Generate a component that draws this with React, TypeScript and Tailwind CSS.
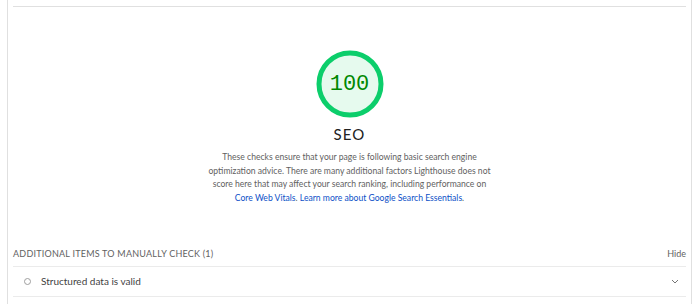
import React from 'react';

const Gauge = ({ score }: { score: number }) => (
    <div className="relative h-[68px] w-[68px]">
        <svg viewBox="0 0 68 68" className="absolute inset-0 h-full w-full">
            <circle cx="34" cy="34" r="31" fill="#e6faee" stroke="#0cce6b" strokeWidth="5" />
        </svg>
        <div className="absolute inset-0 flex items-center justify-center font-['Liberation_Mono',monospace] text-[22px] text-[#008800]">
            {score}
        </div>
    </div>
);

export default function App() {
    return (
        <div className="h-[304px] w-[700px] overflow-hidden bg-white pl-[7px] font-['Lato',sans-serif]">
            <div className="h-full w-[685px] border-x border-[#e0e0e0] px-[5px] pt-[6px]">
                <div className="border-t border-[#e0e0e0]" />
                <div className="flex flex-col items-center pt-[43px]">
                    <Gauge score={100} />
                    <h2 className="mt-[6px] text-[15px] leading-[20px] tracking-[0.08em] text-[#212121]">SEO</h2>
                    <p className="mt-[7px] w-[292px] text-center text-[8.6px] leading-[13.7px] text-[#616161]">
                        These checks ensure that your page is following basic search engine optimization advice. There are many additional factors Lighthouse does not score here that may affect your search ranking, including performance on{' '}
                        <a className="text-[#0c50c7]">Core Web Vitals</a>.{' '}
                        <a className="text-[#0c50c7]">Learn more about Google Search Essentials</a>.
                    </p>
                </div>
                <div className="mt-[41px] flex items-center justify-between pb-[5px] text-[9px] leading-[14px] text-[#616161]">
                    <span className="tracking-[0.025em]">ADDITIONAL ITEMS TO MANUALLY CHECK (1)</span>
                    <span>Hide</span>
                </div>
                <div className="flex h-[31px] items-center justify-between border-y border-[#ebebeb] pl-[11px] pr-[7px]">
                    <div className="flex items-center gap-[10px]">
                        <span className="h-[7px] w-[7px] rounded-full border border-[#9e9e9e]" />
                        <span className="text-[10px] text-[#424242]">Structured data is valid</span>
                    </div>
                    <svg width="8" height="5" viewBox="0 0 8 5" className="text-[#757575]">
                        <path d="M1 1l3 3 3-3" fill="none" stroke="currentColor" strokeWidth="1" />
                    </svg>
                </div>
            </div>
        </div>
    );
}
